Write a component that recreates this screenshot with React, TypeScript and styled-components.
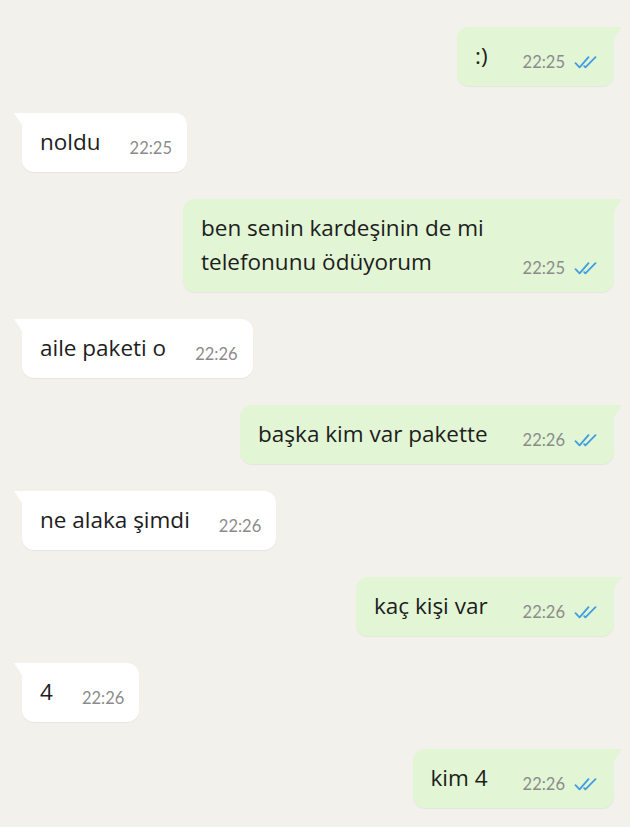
import React from "react";
import styled, { createGlobalStyle } from "styled-components";

const Global = createGlobalStyle`
  html, body {
    margin: 0;
    padding: 0;
    background: #f3f1ec;
  }
  body {
    font-family: "Open Sans", Lato, sans-serif;
    -webkit-font-smoothing: antialiased;
  }
`;

const Chat = styled.div`
  display: flex;
  flex-direction: column;
  gap: 27px;
  padding: 27px 16px 20px 22px;
  min-height: 827px;
  box-sizing: border-box;
  background: #f3f1ec;
`;

const Bubble = styled.div<{ $out?: boolean; $width?: number }>`
  position: relative;
  align-self: ${(p) => (p.$out ? "flex-end" : "flex-start")};
  display: flex;
  align-items: flex-end;
  gap: ${(p) => (p.$out ? "35px" : "29px")};
  box-sizing: border-box;
  ${(p) => (p.$width ? `width: ${p.$width}px;` : "")}
  padding: 12px 15px 13px 18px;
  border-radius: 12px;
  ${(p) => (p.$out ? "border-top-right-radius: 0;" : "border-top-left-radius: 0;")}
  background: ${(p) => (p.$out ? "#e2f5d5" : "#ffffff")};
  box-shadow: 0 1px 1px rgba(0, 0, 0, 0.05);

  &::before {
    content: "";
    position: absolute;
    top: 0;
    width: 8px;
    height: 12px;
    background: inherit;
    ${(p) =>
      p.$out
        ? "right: -8px; clip-path: polygon(0 0, 100% 0, 0 100%);"
        : "left: -8px; clip-path: polygon(0 0, 100% 0, 100% 100%);"}
  }
`;

const Text = styled.span`
  flex: 1;
  font-size: 22.5px;
  line-height: 34px;
  color: #1d1d1d;
  white-space: pre-line;
`;

const Meta = styled.span`
  display: flex;
  align-items: center;
  gap: 9px;
  font-family: Lato, "Open Sans", sans-serif;
  font-size: 16.5px;
  line-height: 18px;
  color: #8b8b8b;
  white-space: nowrap;
  padding-bottom: 2px;
`;

const Ticks = () => (
  <svg width="25" height="13" viewBox="0 0 25 13" fill="none">
    <path
      d="M1.5 7.2 L5.6 11.4 L14.5 1.2"
      stroke="#3f9de0"
      strokeWidth="1.8"
      strokeLinecap="round"
      strokeLinejoin="round"
    />
    <path
      d="M10.2 10.2 L11.4 11.4 L21.5 1.2"
      stroke="#3f9de0"
      strokeWidth="1.8"
      strokeLinecap="round"
      strokeLinejoin="round"
    />
  </svg>
);

type Msg = { text: string; time: string; out?: boolean; width?: number };

const messages: Msg[] = [
  { text: ":)", time: "22:25", out: true },
  { text: "noldu", time: "22:25" },
  { text: "ben senin kardeşinin de mi\ntelefonunu ödüyorum", time: "22:25", out: true, width: 431 },
  { text: "aile paketi o", time: "22:26" },
  { text: "başka kim var pakette", time: "22:26", out: true },
  { text: "ne alaka şimdi", time: "22:26" },
  { text: "kaç kişi var", time: "22:26", out: true },
  { text: "4", time: "22:26" },
  { text: "kim 4", time: "22:26", out: true },
];

export default function App() {
  return (
    <>
      <Global />
      <Chat>
        {messages.map((m, i) => (
          <Bubble key={i} $out={m.out} $width={m.width}>
            <Text>{m.text}</Text>
            <Meta>
              {m.time}
              {m.out && <Ticks />}
            </Meta>
          </Bubble>
        ))}
      </Chat>
    </>
  );
}
